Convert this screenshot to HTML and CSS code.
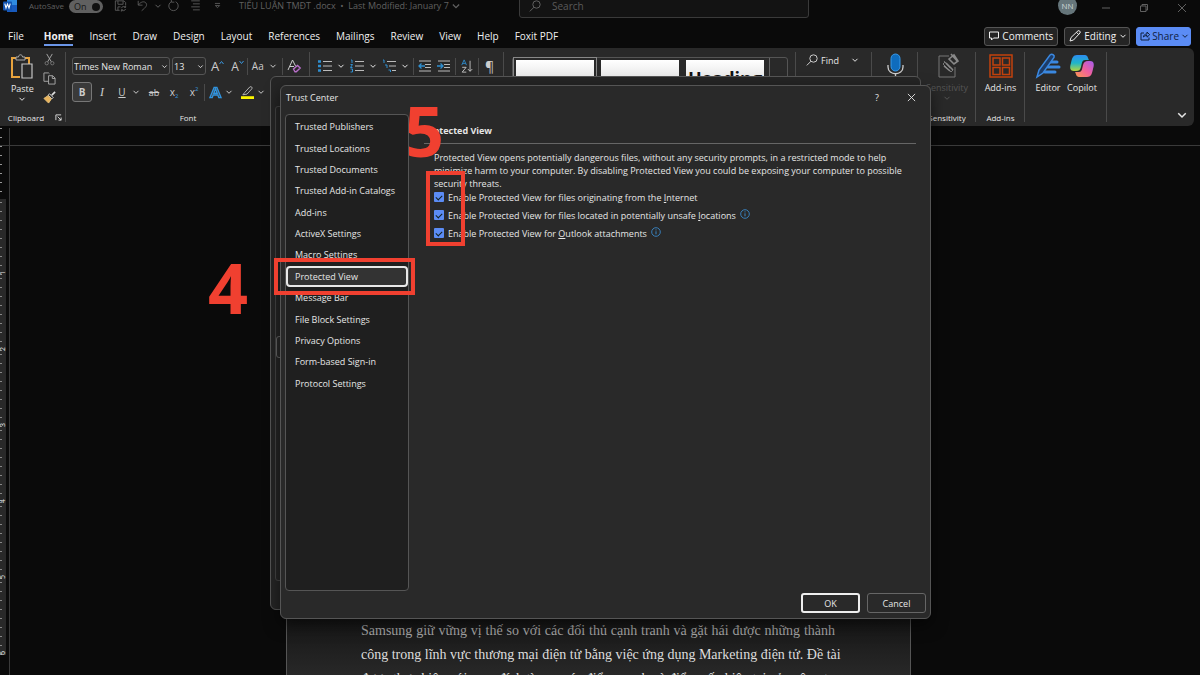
FILE: index.html
```html
<!DOCTYPE html>
<html lang="en">
<head>
<meta charset="utf-8">
<title>Trust Center</title>
<link rel="stylesheet" href="styles.css">
</head>
<body>
<svg class="defs" aria-hidden="true">
  <symbol id="chev" viewBox="0 0 8 8"><path d="M1.5 2.8 4 5.3 6.5 2.8" fill="none" stroke="currentColor" stroke-width="1"/></symbol>
  <symbol id="info" viewBox="0 0 10 10"><circle cx="5" cy="5" r="4.3" fill="none" stroke="#3a88c8" stroke-width=".9"/><path d="M5 4.3v3M5 2.4v1" stroke="#3a88c8"/></symbol>
  <linearGradient id="gBlue" x1="0" y1="0" x2="0" y2="1"><stop offset="0" stop-color="#2d8cf0"/><stop offset=".5" stop-color="#1fb5c9"/><stop offset="1" stop-color="#b5d63c"/></linearGradient>
  <linearGradient id="gPink" x1="1" y1="0" x2="0" y2="1"><stop offset="0" stop-color="#a45cf0"/><stop offset=".5" stop-color="#f0609c"/><stop offset="1" stop-color="#fb9a4b"/></linearGradient>
</svg>

<div class="app">
  <header class="titlebar">
    <svg class="logo" viewBox="0 0 14 14"><path d="M4 0h9a1 1 0 0 1 1 1v11a1 1 0 0 1-1 1H4z" fill="#2f8be0"/><path d="M4 6h10v6a1 1 0 0 1-1 1H4z" fill="#185abd"/><rect y="2.500" width="9" height="9" rx="1" fill="#1254b0"/><path d="M1.800 4.700 3 9l1.500-4L6 9l1.200-4.300" fill="none" stroke="#fff" stroke-width="1.100"/></svg>
    <span class="autosave">AutoSave</span>
    <button class="toggle" aria-label="AutoSave on"><span>On</span><i></i></button>
    <span class="quick">
      <svg viewBox="0 0 14 14"><path d="M1 1h10l2 2v3M1 1v11h5M4 1v4h6V1M4 12V8h3" /><path d="M8 9.500a3 3 0 0 1 5-1M13 6.500v2h-2M13 10.500a3 3 0 0 1-5 1M8 13.500v-2h2"/></svg>
      <svg viewBox="0 0 14 14"><path d="M2 1v5h5M2.300 5.700C5 2 9 1 11 3.500s0 5-5 9"/></svg>
      <svg class="tiny" viewBox="0 0 8 8"><use href="#chev"/></svg>
      <svg viewBox="0 0 14 14"><path d="M4.500 2A5.500 5.500 0 1 0 9.500 2M4.500-1v3.500H8"/></svg>
      <svg viewBox="0 0 14 14"><path d="M2 1h10M4 4.500h8M2 8h10M4 11.500h8"/></svg>
      <svg viewBox="0 0 14 14"><path d="M4 4h6M4.500 6.500 7 9l2.500-2.500z"/></svg>
    </span>
    <span class="docname">TIỂU LUẬN TMĐT .docx &nbsp;•&nbsp; Last Modified: January 7 <svg class="tiny" viewBox="0 0 8 8"><use href="#chev"/></svg></span>
    <label class="search"><svg viewBox="0 0 12 12"><circle cx="7.500" cy="4.500" r="3.700"/><path d="M5 7.200.8 11.400"/></svg><input type="text" placeholder="Search" aria-label="Search"></label>
    <span class="window-tools">
      <span class="avatar">NN</span>
      <button aria-label="Minimize"><svg viewBox="0 0 10 10"><path d="M1 5h8"/></svg></button>
      <button aria-label="Restore"><svg viewBox="0 0 10 10"><path d="M1.500 3h5.500v5.500H1.500zM3 3V1.500h5.500V7H7"/></svg></button>
      <button aria-label="Close"><svg viewBox="0 0 10 10"><path d="m1 1 8 8M9 1 1 9"/></svg></button>
    </span>
  </header>

  <nav class="tabs">
    <button class="file">File</button><button class="on">Home</button><button>Insert</button><button>Draw</button><button>Design</button><button>Layout</button><button>References</button><button>Mailings</button><button>Review</button><button>View</button><button>Help</button><button>Foxit PDF</button>
    <span class="tab-actions">
      <button class="pill"><svg viewBox="0 0 10 10"><path d="M.500 1h9v6H4.500L2.500 9V7h-2z"/></svg>Comments</button>
      <button class="pill"><svg class="pen" viewBox="0 0 12 12"><path d="m1 11 1-3.500L9 .8c1-.8 3 1 2 2.200L4.500 10zM7.500 2.300l2.200 2.200"/></svg>Editing<svg class="c" viewBox="0 0 8 8"><use href="#chev"/></svg></button>
      <button class="pill share"><svg viewBox="0 0 10 10"><path d="M4 2H1v7h8V6.500M3.500 6C3.500 4 5 3 7 3V1l2.700 2.700L7 6.200V4.500C5.500 4.500 4.300 5 3.500 6z"/></svg>Share<svg class="c" viewBox="0 0 8 8"><use href="#chev"/></svg></button>
    </span>
  </nav>

  <section class="ribbon">
    <div class="group clipboard">
      <div class="clip-body">
        <button class="big"><svg viewBox="0 0 24 26"><path d="M6 4H2v19h8M15 4h4v6" fill="none" stroke="#e8a33d" stroke-width="2"/><path d="M6 6V3h2.500c0-3 4-3 4 0H15v3z" fill="#292929" stroke="#aaa"/><path d="M12 10h10v14H12z" fill="#292929" stroke="#c4c4c4" stroke-width="1.200"/></svg>Paste<svg class="c" viewBox="0 0 8 8"><use href="#chev"/></svg></button>
        <div class="mini">
          <button aria-label="Cut"><svg viewBox="0 0 14 14"><path d="M4 1l5 8.500M10 1 5 9.500" stroke="#aaa"/><circle cx="4" cy="11" r="1.800" stroke="#777"/><circle cx="10" cy="11" r="1.800" stroke="#777"/></svg></button>
          <button aria-label="Copy"><svg viewBox="0 0 14 14"><path d="M6 10H1V1h5l1 1M6 4h4.500L13 6.500V13H6zM10 4v3h3" stroke="#aaa"/></svg></button>
          <button aria-label="Format Painter"><svg viewBox="0 0 14 14"><path d="M13 1 9.500 4.500" stroke="#ddd" stroke-width="1.800"/><path d="m7 3 4 4-1.500 1.500-4-4z" stroke="#ddd"/><path d="M5.500 5 9 8.500 6 13 1 8z" fill="#e9b45c" stroke="#e9c27a"/></svg></button>
        </div>
      </div>
      <span class="cap">Clipboard<svg class="launch" viewBox="0 0 8 8"><path d="M1 7V1h6M3 3l4 4M7 4v3H4"/></svg></span>
    </div>

    <div class="group font">
      <div class="row r1">
        <span class="combo wide"><select aria-label="Font"><option>Times New Roman</option></select><svg viewBox="0 0 8 8"><use href="#chev"/></svg></span>
        <span class="combo narrow"><select aria-label="Font size"><option>13</option></select><svg viewBox="0 0 8 8"><use href="#chev"/></svg></span>
        <button class="t grow">A<svg viewBox="0 0 5 5"><path d="m.500 4 2-2.500 2 2.500" stroke="#3a96dd"/></svg></button>
        <button class="t shrink">A<svg viewBox="0 0 5 5"><path d="m.500 1 2 2.500L4.500 1" stroke="#3a96dd"/></svg></button>
        <i class="sep"></i>
        <button class="t aa">Aa<svg class="c" viewBox="0 0 8 8"><use href="#chev"/></svg></button>
        <i class="sep"></i>
        <button class="t" aria-label="Clear formatting"><svg class="i" viewBox="0 0 14 14"><path d="M1 11 5.500 1 8.500 7M2.800 7.500H7" stroke="#ccc"/><path d="m6.500 10 4-3.500 2.700 2.500-4 3.800H8z" stroke="#b86fc9" stroke-width="1.400"/></svg></button>
      </div>
      <div class="row r2">
        <button class="fmt bold on">B</button>
        <button class="fmt italic">I</button>
        <button class="fmt under">U</button>
        <svg class="c" viewBox="0 0 8 8"><use href="#chev"/></svg>
        <button class="fmt strike">ab</button>
        <button class="fmt">x<sub>2</sub></button>
        <button class="fmt">x<sup>2</sup></button>
        <i class="sep"></i>
        <button class="fmt" aria-label="Text effects"><svg class="i" viewBox="0 0 14 14"><path d="M1 12.500 5.500 1.500h3l4.500 11h-2.500l-1-2.800h-5l-1 2.800zM5.200 7.800h3.600L7 3z" fill="#b8d8f0" fill-opacity=".2" stroke="#2f94e0" stroke-width="1.400"/></svg></button>
        <svg class="c" viewBox="0 0 8 8"><use href="#chev"/></svg>
        <button class="fmt" aria-label="Highlight"><svg class="i" viewBox="0 0 14 14"><path d="m4 7 5.500-6c1.500-1 3 .5 2.200 2L6.500 8.700 2 9.500z" stroke="#bbb"/><path d="M0 11h14v3H0z" fill="#fbf500" stroke="none"/></svg></button>
        <svg class="c" viewBox="0 0 8 8"><use href="#chev"/></svg>
      </div>
      <span class="cap">Font</span>
    </div>

    <div class="group para">
      <div class="row">
        <button aria-label="Bullets"><svg class="l" viewBox="0 0 14 14"><path d="M5 2.500h9M5 7h9M5 11.500h9" stroke="#bbb"/><path d="M0 2.500h3M0 7h3M0 11.500h3" stroke="#2f8fd0" stroke-width="2.600"/></svg><svg class="c" viewBox="0 0 8 8"><use href="#chev"/></svg></button>
        <button aria-label="Numbering"><svg class="l" viewBox="0 0 14 14"><path d="M5 2.500h9M5 7h9M5 11.500h9" stroke="#bbb"/><path d="M1 1h1v3M.500 5.500h2l-2 3h2M.500 10h2v3h-2" stroke="#2f8fd0"/></svg><svg class="c" viewBox="0 0 8 8"><use href="#chev"/></svg></button>
        <button aria-label="Multilevel list"><svg class="l" viewBox="0 0 14 14"><path d="M5 2.500h9M7 7h7M10 11.500h4" stroke="#bbb"/><path d="M1 1h1v3M3 6h2v3M6.500 11h2v2" stroke="#2f8fd0"/></svg><svg class="c" viewBox="0 0 8 8"><use href="#chev"/></svg></button>
        <i class="sep"></i>
        <button aria-label="Decrease indent"><svg class="l" viewBox="0 0 14 14"><path d="M1 2h12M7 5.500h6M7 8.500h6M1 12h12" stroke="#bbb"/><path d="M7 7H1M3.500 4.500 1 7l2.500 2.500" stroke="#2f8fd0" stroke-width="1.300"/></svg></button>
        <button aria-label="Increase indent"><svg class="l" viewBox="0 0 14 14"><path d="M1 2h12M7 5.500h6M7 8.500h6M1 12h12" stroke="#bbb"/><path d="M0 7h6M3.500 4.500 6 7 3.500 9.500" stroke="#2f8fd0" stroke-width="1.300"/></svg></button>
        <i class="sep"></i>
        <button aria-label="Sort"><svg class="l" viewBox="0 0 14 16"><path d="m1 7 2.700-6L6.400 7M2 5h3.500" stroke="#2f8fd0"/><path d="M1.500 9.500h4.500l-4.500 5.500h4.700M10.500 2v12M8 11.500l2.500 2.500 2.500-2.500" stroke="#ccc"/></svg></button>
        <i class="sep"></i>
        <button class="pil">¶</button>
      </div>
    </div>

    <div class="group styles">
      <div class="gallery"><button class="sel" aria-label="Normal"></button><button aria-label="No Spacing"></button><button class="heading">Heading</button><span></span></div>
    </div>

    <div class="group edit"><button><svg class="l" viewBox="0 0 12 12"><circle cx="7.500" cy="4.500" r="3.700" stroke="#ccc"/><path d="M5 7.200.8 11.400" stroke="#ccc"/></svg>Find<svg class="c" viewBox="0 0 8 8"><use href="#chev"/></svg></button></div>
    <div class="group voice"><button class="big" aria-label="Dictate">
      <svg viewBox="0 0 24 26"><rect x="8" y="1" width="9" height="17" rx="4.500" fill="#0f6cbd" stroke="#3a9ae8"/><path d="M5 12v2c0 9 15 9 15 0v-2M12.500 21v4" fill="none" stroke="#ccc" stroke-width="1.300"/></svg></button></div>
    <div class="group sens"><button class="big dim">
      <svg viewBox="0 0 24 26"><path d="M14 3H4v21h16V14M10 9 8 11l8 8 2-2zM9 8l6 7" fill="none" stroke="#777"/><path d="M14 6 19 2l4 6-4 3zM16 1l7 8M11 10l7 7M9 13l6 5" fill="none" stroke="#888" stroke-width="1.600"/></svg>Sensitivity<svg class="c" viewBox="0 0 8 8"><use href="#chev"/></svg></button><span class="cap">Sensitivity</span></div>
    <div class="group addins"><button class="big">
      <svg viewBox="0 0 24 26"><path d="M1 2h22v22H1zM4 5h7v7H4zM13.500 5h7v7h-7zM4 14.500h7v7H4zM13.500 14.500h7v7h-7z" fill="none" stroke="#c2410c" stroke-width="1.500"/></svg>Add-ins</button><span class="cap">Add-ins</span></div>
    <div class="group ai">
      <button class="big"><svg viewBox="0 0 24 26"><path d="M14 9h7M12 14h11M9 19h10" stroke="#3a88e0" stroke-width="3" stroke-linecap="round"/><path d="M1 24 3 17 14 2c2-1.500 5 0 4 2.500L7 20z" fill="#1d3c68" stroke="#3a88e0" stroke-width="1.500"/></svg>Editor</button>
      <button class="big"><svg viewBox="0 0 24 26"><path d="M7 2h8c3 0 3 4 4 5h-4c-3 0-3 3-4 7-1 3-2 4-5 4H4c-5 0-4-5-3-8C2 5 3 2 7 2z" fill="url(#gBlue)"/><path d="M17 24H9c-3 0-3-4-4-5h4c3 0 3-3 4-7 1-3 2-4 5-4h2c5 0 4 5 3 8-1 5-2 8-6 8z" fill="url(#gPink)"/></svg>Copilot</button>
    </div>
    <div class="rest"><button aria-label="Collapse ribbon"><svg viewBox="0 0 8 8"><use href="#chev"/></svg></button></div>
  </section>

  <main class="workspace">
    <aside class="ruler"><div class="ruler-top"></div><div class="inches"><span>1</span><span>2</span><span>3</span><span>4</span><span>5</span><span>6</span></div></aside>
    <article class="paper">
      <p>Samsung giữ vững vị thế so với các đối thủ cạnh tranh và gặt hái được những thành</p>
      <p>công trong lĩnh vực thương mại điện tử bằng việc ứng dụng Marketing điện tử. Đề tài</p>
      <p>được thực hiện với mục đích tìm ra các điểm mạnh và điểm yếu hiện tại của công ty</p>
    </article>
  </main>
</div>

<div class="window options"><div class="options-pane"></div><i class="options-scroll"></i></div>

<section class="window trust" role="dialog" aria-labelledby="trust-title">
  <header><h1 id="trust-title">Trust Center</h1><button aria-label="Help">?</button><button aria-label="Close"><svg viewBox="0 0 10 10"><path d="m1 1 8 8M9 1 1 9"/></svg></button></header>
  <div class="body">
    <ul class="side">
      <li><button>Trusted Publishers</button></li><li><button>Trusted Locations</button></li><li><button>Trusted Documents</button></li><li><button>Trusted Add-in Catalogs</button></li><li><button>Add-ins</button></li><li><button>ActiveX Settings</button></li><li><button>Macro Settings</button></li><li><button class="current">Protected View</button></li><li><button>Message Bar</button></li><li><button>File Block Settings</button></li><li><button>Privacy Options</button></li><li><button>Form-based Sign-in</button></li><li><button>Protocol Settings</button></li>
    </ul>
    <div class="content">
      <h2>Protected View</h2>
      <p>Protected View opens potentially dangerous files, without any security prompts, in a restricted mode to help minimize harm to your computer. By disabling Protected View you could be exposing your computer to possible security threats.</p>
      <label><input type="checkbox" checked><span>Enable Protected View for files originating from the <u>I</u>nternet</span></label>
      <label><input type="checkbox" checked><span>Enable Protected View for files located in potentially unsafe <u>l</u>ocations</span><svg viewBox="0 0 10 10"><use href="#info"/></svg></label>
      <label><input type="checkbox" checked><span>Enable Protected View for <u>O</u>utlook attachments</span><svg viewBox="0 0 10 10"><use href="#info"/></svg></label>
    </div>
  </div>
  <footer><button class="ok">OK</button><button>Cancel</button></footer>
</section>

<div class="step four">4</div>
<div class="step five"><span>5</span></div>
<div class="mark mark-item"></div>
<div class="mark mark-checks"></div>
</body>
</html>
```
FILE: styles.css
```css
* { box-sizing: border-box; }
body { margin: 0; background: #0a0a0a; color: #e6e6e6; font-family: "Open Sans", "Noto Sans", sans-serif; font-size: 9px; overflow: hidden; }
button, input, select { font: inherit; color: inherit; background: none; border: 0; padding: 0; margin: 0; appearance: none; white-space: nowrap; }
button { display: flex; align-items: center; justify-content: center; }
svg { fill: none; stroke: currentColor; flex: none; overflow: visible; }
.defs { position: absolute; width: 0; height: 0; }
.c { width: 8px; height: 8px; }
.app { min-height: 100vh; display: flex; flex-direction: column; }

.titlebar { height: 24px; display: flex; align-items: flex-start; line-height: 12px; color: #606060; position: relative; }
.logo { width: 14px; height: 14px; stroke: none; margin: -1px 12px 0 3px; }
.autosave { width: 40px; font-size: 8px; }
.toggle { width: 34px; height: 13px; border-radius: 8px; background: #606060; color: #151515; justify-content: space-between; padding: 0 3px 0 5px; }
.toggle i { width: 8px; height: 8px; border-radius: 50%; background: #111; }
.quick { display: flex; align-items: center; margin-left: 11px; gap: 9px; width: 125px; }
.quick svg { width: 13px; height: 12px; }
.quick .tiny { width: 8px; height: 8px; margin: 0 -4px; }
.docname { display: flex; align-items: center; gap: 2px; }
.docname .tiny { width: 10px; height: 10px; }
.search { position: absolute; left: 519px; width: 290px; top: -6px; height: 24px; border: 1px solid #3a3a3a; border-radius: 3px; background: #131313; display: flex; align-items: center; gap: 11px; padding-left: 9px; }
.search svg { width: 12px; height: 12px; }
.search input { width: 200px; font-size: 10px; }
.search input::placeholder { color: #5a5a5a; }
.window-tools { margin-left: auto; display: flex; align-items: center; gap: 28px; padding-right: 13px; }
.window-tools svg { width: 10px; height: 10px; }
.avatar { width: 19px; height: 19px; margin: -4px -4px 0 0; border-radius: 50%; background: #65757a; color: #d0d6d8; display: grid; place-items: center; font-size: 8px; }

.tabs { height: 24px; display: flex; align-items: center; font-size: 10px; padding-left: 8px; gap: 16px; color: #f0f0f0; }
.tabs > button { height: 20px; }
.tabs .file { margin-right: 4px; }
.tabs .on { font-weight: bold; border-bottom: 2px solid #6b96e8; border-top: 2px solid transparent; }
.tab-actions { margin-left: auto; padding-right: 9px; display: flex; gap: 6px; }
.pill { height: 19px; border: 1px solid #555; border-radius: 3px; background: #242424; padding: 0 4px; gap: 3px; }
.pill svg { width: 10px; height: 10px; }
.pill .pen { width: 12px; height: 12px; }
.pill .c { width: 8px; height: 8px; margin: 0 -2px 0 0; }
.pill.share { background: #5b8cf5; border-color: #5b8cf5; color: #10213f; padding: 0 3px; gap: 2px; }

.ribbon { height: 78px; margin-right: 6px; display: flex; background: #292929; border-radius: 0 6px 6px 0; }
.group { flex: none; position: relative; padding: 5px 6px 2px; display: flex; flex-direction: column; }
.group::after { content: ""; position: absolute; right: 0; top: 4px; bottom: 4px; width: 1px; background: #4a4a4a; }
.cap { margin-top: auto; height: 14px; display: flex; align-items: center; justify-content: center; font-size: 8px; }
.clipboard { width: 66px; }
.clipboard .cap { gap: 11px; margin-left: 4px; }
.launch { width: 7px; height: 7px; }
.clip-body { display: flex; gap: 0; }
.mini { width: 22px; display: flex; flex-direction: column; gap: 6px; align-items: center; }
.mini svg { width: 13px; height: 13px; }
.big { flex-direction: column; width: 34px; font-size: 9px; line-height: 13px; }
.big svg { width: 24px; height: 26px; stroke: none; margin-bottom: 2px; }
.big .c { width: 8px; height: 8px; stroke: currentColor; margin: 0; }
.font { width: 244px; }
.clipboard .big { width: 34px; }
.row { height: 26px; display: flex; align-items: center; }
.sep { width: 1px; height: 17px; background: #4a4a4a; }
.combo { height: 18px; border: 1px solid #555; border-radius: 3px; display: flex; align-items: center; padding: 0 1px; }
.combo select { flex: 1; min-width: 0; }
.combo svg { width: 7px; height: 7px; }
.wide { width: 98px; }
.narrow { width: 34px; margin-left: 2px; }
.t { color: #ccc; font-size: 13px; align-items: center; }
.t > svg:not(.c):not(.i) { width: 5px; height: 5px; margin-bottom: 7px; }
.grow { margin: 0 7px 0 5px; }
.shrink { font-size: 12px; margin-right: 3px; }
.aa { font-size: 10px; margin: 0 5px 0 4px; gap: 5px; }
.i { width: 14px; height: 14px; }
.sep + .t:last-child { margin-left: 4px; }
.r2 { color: #ccc; font-size: 10px; }
.fmt { width: 20px; height: 20px; }
.fmt .i { width: 13px; height: 13px; }
.fmt sub, .fmt sup { font-size: 6px; color: #3a96dd; }
.fmt sub { margin-top: 7px; }
.fmt sup { margin-bottom: 7px; }
.bold { font-weight: bold; border: 1px solid #777; border-radius: 3px; background: #3a3a3a; }
.italic { font-family: "Liberation Serif", serif; font-style: italic; font-size: 12px; }
.under { text-decoration: underline; }
.strike { text-decoration: line-through; font-size: 9px; }
.r2 .c { margin-right: 4px; }
.para { width: 194px; padding-left: 8px; }
.para .row { gap: 5px; }
.para button { gap: 5px; }
.l { width: 14px; height: 14px; }
.para .sep { margin: 0 -1px; }
.para .pil { font-size: 14px; color: #ccc; margin-left: 2px; }
.styles { width: 292px; padding: 9px 8px 0; }
.gallery { border: 1px solid #555; border-radius: 3px; height: 62px; display: flex; gap: 3px; padding-left: 1px; }
.gallery button { width: 82px; background: linear-gradient(#fff, #e4e4e4 20px); border: 2px solid #292929; color: #111; }
.gallery .sel { outline: 1px solid #888; }
.gallery .heading { font-size: 18px; font-weight: bold; align-items: flex-start; padding-top: 6px; }
.gallery span { flex: 1; border-left: 1px solid #666; }
.edit { width: 76px; padding-left: 10px; }
.edit button { gap: 3px; height: 14px; justify-content: flex-start; }
.edit .l { width: 12px; height: 12px; }
.edit .c { margin-left: 9px; }
.voice { width: 46px; }
.sens { width: 58px; align-items: center; }
.dim { color: #555; }
.addins { width: 49px; align-items: center; }
.ai { width: 82px; flex-direction: row; align-items: flex-start; }
.rest { flex: 1; display: flex; justify-content: flex-end; align-items: flex-end; padding: 0 6px 5px; }
.rest svg { width: 12px; height: 12px; }

.workspace { flex: 1; display: flex; margin-top: 10px; background: linear-gradient(#3a3a3a, #3a3a3a) 0 9px / 100% 1px no-repeat; }
.ruler { width: 10px; border-right: 1px solid #3a3a3a; margin-top: -8px; }
.ruler-top { height: 71px; width: 2px; background: repeating-linear-gradient(#999 0 1px, transparent 1px 9px); }
.inches { width: 6px; background: #292929; }
.inches span { display: flex; align-items: center; justify-content: flex-start; height: 76px; width: 6px; writing-mode: vertical-rl; transform: rotate(180deg); font-size: 7px; line-height: 6px; background: repeating-linear-gradient(#888 0 1px, transparent 1px 9px) right / 2px 100% no-repeat; }
.paper { width: 625px; margin-left: 276px; margin-top: 430px; height: 109px; overflow: hidden; border: 1px solid #555; border-width: 0 1px; background: linear-gradient(#151515 50px, #282828); padding: 53px 75px 0 74px; font: 14px/24px "Liberation Serif", serif; color: #ddd; }
.paper p { margin: 0; text-align: justify; text-align-last: justify; white-space: nowrap; }
.paper p:first-child { color: #a8a8a8; }

.window { position: absolute; border: 1px solid #555; border-radius: 6px; background: #292929; }
.options { left: 270px; top: 76px; width: 651px; height: 534px; background: #252525; }
.options-pane { position: absolute; left: 4px; top: 29px; width: 130px; bottom: 28px; border: 1px solid #444; border-radius: 3px; }
.options-scroll { position: absolute; left: 5px; top: 259px; width: 8px; height: 22px; border: 1px solid #666; border-radius: 3px; background: #292929; }
.trust { left: 280px; top: 85px; width: 651px; height: 534px; display: flex; flex-direction: column; box-shadow: 0 6px 16px #0008; }
.trust header { height: 28px; display: flex; align-items: center; padding: 0 14px 5px 5px; gap: 28px; }
.trust h1 { font-size: 9px; font-weight: normal; margin: 0 auto 0 0; }
.trust header svg { width: 9px; height: 9px; }
.body { flex: 1; display: flex; padding: 0 14px 0 4px; gap: 15px; min-height: 0; }
.side { width: 124px; margin: 0; padding: 1px 0 196px; list-style: none; border: 1px solid #555; border-radius: 4px; background: #1f1f1f; display: grid; grid-template-rows: repeat(13, 1fr); }
.side li, .side button { display: flex; }
.side button { flex: 1; justify-content: flex-start; align-items: center; padding-left: 9px; min-height: 0; }
.side .current { border: 2px solid #e8e8e8; border-radius: 4px; background: #333; padding-left: 7px; }
.content { flex: 1; padding-top: 8px; }
.content h2 { font-size: 9px; line-height: 18px; margin: 0; padding-bottom: 3px; border-bottom: 1px solid #666; }
.content p { margin: 7px 0 -2px 10px; line-height: 13px; }
.content label { display: flex; align-items: center; height: 18px; margin-left: 10px; gap: 4px; }
.content label svg { width: 10px; height: 10px; margin-bottom: 3px; }
.content input { width: 10px; height: 10px; border-radius: 1px; background: #5b8cf5; display: grid; place-items: center; }
.content input::after { content: ""; width: 5px; height: 3px; border: solid #122; border-width: 0 0 1px 1px; transform: rotate(-45deg); }
.trust footer { height: 27px; display: flex; justify-content: flex-end; gap: 7px; padding: 2px 4px 5px; }
.trust footer button { width: 59px; border: 1px solid #666; border-radius: 3px; }
.trust footer .ok { border: 2px solid #eee; }

.step { position: absolute; color: #f04030; font-weight: 700; font-size: 70px; line-height: 70px; }
.four { left: 208px; top: 252px; }
.five { left: 409px; top: 95px; overflow: hidden; }
.five span { display: block; margin-left: -5px; }
.mark { position: absolute; border: 4px solid #f04030; }
.mark-item { left: 274px; top: 258px; width: 141px; height: 37px; }
.mark-checks { left: 426px; top: 171px; width: 39px; height: 75px; }
```
